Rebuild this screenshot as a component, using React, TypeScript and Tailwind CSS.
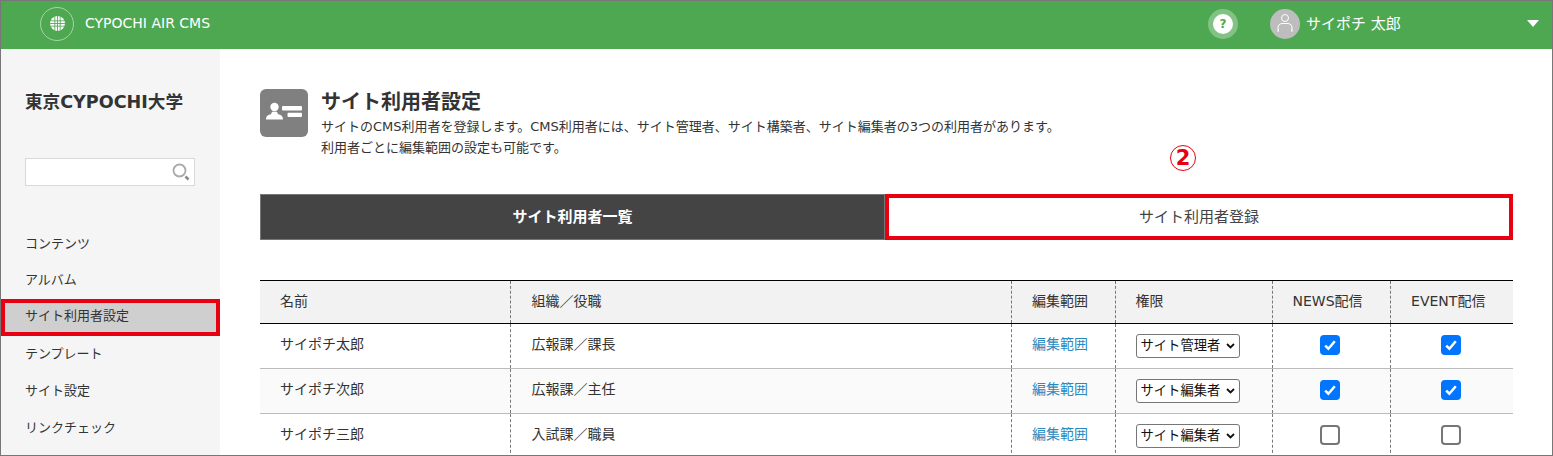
import React from "react";

const FONT = "font-['DejaVu_Sans','Noto_Sans_CJK_JP',sans-serif]";

const navItems = ["コンテンツ", "アルバム", "サイト利用者設定", "テンプレート", "サイト設定", "リンクチェック"];

const users = [
  { name: "サイポチ太郎", org: "広報課／課長", role: "サイト管理者", news: true, event: true, alt: false },
  { name: "サイポチ次郎", org: "広報課／主任", role: "サイト編集者", news: true, event: true, alt: true },
  { name: "サイポチ三郎", org: "入試課／職員", role: "サイト編集者", news: false, event: false, alt: false },
];

const GlobeIcon = () => (
  <svg width="15" height="15" viewBox="0 0 14 14" fill="none">
    <circle cx="7" cy="7" r="7" fill="#fff" />
    <path d="M0 4.5h14M0 7h14M0 9.5h14M4.5 0v14M7 0v14M9.5 0v14" stroke="#4ea851" strokeWidth="0.8" />
  </svg>
);

const UserIcon = () => (
  <svg width="20" height="22" viewBox="0 0 20 22" fill="none" stroke="#fff" strokeWidth="1">
    <circle cx="10" cy="5" r="3.5" />
    <path d="M3 19v-4a4.5 4.5 0 0 1 4-4.5h6a4.5 4.5 0 0 1 4 4.5v4M3 17h1M16 17h1" />
  </svg>
);

const CardIcon = () => (
  <svg className="shrink-0" width="48" height="48" viewBox="0 0 48 48">
    <rect width="48" height="48" rx="6" fill="#808080" />
    <circle cx="14.5" cy="18" r="4.2" fill="#fff" />
    <path d="M6 30.5c0-3.5 2-4.5 5-5.2l1-2.5h5l1 2.5c3 .7 5 1.7 5 5.2z" fill="#fff" />
    <rect x="22" y="17" width="20" height="4.6" rx="1" fill="#fff" />
    <rect x="27.5" y="23.7" width="14.5" height="4.2" rx="1" fill="#fff" />
  </svg>
);

const Check = ({ on }: { on: boolean }) =>
  on ? (
    <span className="inline-flex h-[20px] w-[20px] items-center justify-center rounded-[4px] bg-[#0075ff]">
      <svg width="16" height="16" viewBox="0 0 15 15" fill="none" stroke="#fff" strokeWidth="2.4">
        <path d="M3 8l3 3 6-7" />
      </svg>
    </span>
  ) : (
    <span className="inline-block h-[20px] w-[20px] rounded-[4px] border-2 border-[#767676] bg-white" />
  );

const RoleSelect = ({ label }: { label: string }) => (
  <div className="flex h-[24px] w-[104px] items-center justify-between rounded-[3px] border border-[#767676] bg-white pl-1 pr-[4px] text-[13.3px] text-[#111]">
    <span className="whitespace-nowrap">{label}</span>
    <svg width="9" height="6" viewBox="0 0 9 6" fill="none" stroke="#111" strokeWidth="1.8">
      <path d="M1 1l3.5 3.5L8 1" />
    </svg>
  </div>
);

const thCls = "border-l border-dashed border-[#777] pb-[2px] font-normal text-[14px]";
const tdCls = "border-l border-dashed border-[#777]";

export default function App() {
  return (
    <div className={`${FONT} flex h-[456px] w-[1553px] flex-col overflow-hidden border border-[#777] text-[#333]`}>
      {/* Header */}
      <header className="flex h-[48px] shrink-0 items-center bg-[#4ea851] pb-[2px] text-white">
        <div className="mb-[1px] ml-[39px] flex h-[34px] w-[34px] items-center justify-center rounded-full border border-[#a5d4a7]">
          <GlobeIcon />
        </div>
        <span className="mb-[1px] ml-[11px] text-[14px]">CYPOCHI AIR CMS</span>
        <div className="ml-auto flex h-[30px] w-[30px] items-center justify-center rounded-full bg-[#83c285]">
          <span className="flex h-[20px] w-[20px] items-center justify-center rounded-full bg-white text-[12px] font-bold text-[#4ea851]">?</span>
        </div>
        <div className="ml-[32px] flex h-[30px] w-[30px] items-center justify-center rounded-full bg-[#bdbdbd]">
          <UserIcon />
        </div>
        <span className="ml-[6px] w-[221px] text-[15px]">サイポチ 太郎</span>
        <span className="mb-[2px] mr-[13px] h-0 w-0 border-x-[6.5px] border-t-[7px] border-x-transparent border-t-white" />
      </header>

      <div className="flex min-h-0 flex-1">
        {/* Sidebar */}
        <aside className="w-[219px] shrink-0 bg-[#f5f5f5]">
          <h2 className="ml-[24px] mt-[41px] text-[17.6px] font-bold leading-[24px] text-[#333]">東京CYPOCHI大学</h2>
          <div className="relative ml-[24px] mt-[44px] h-[28px] w-[170px] border border-[#d9d9d9] bg-white">
            <svg className="absolute right-[3px] top-[3px]" width="20" height="20" viewBox="0 0 20 20" fill="none">
              <circle cx="8.5" cy="8.5" r="6" stroke="#aaa" strokeWidth="1.8" />
              <path d="M14.5 14.5l3 3" stroke="#888" strokeWidth="2.5" />
            </svg>
          </div>
          <nav className="mt-[39px] text-[13px]">
            {navItems.map((item) =>
              item === "サイト利用者設定" ? (
                <div key={item} className="flex h-[37px] items-center border-4 border-[#e60012] bg-[#cfcfcf] pb-[2px] pl-[20px] text-[#333]">
                  {item}
                </div>
              ) : (
                <div key={item} className="flex h-[36.8px] items-center pl-[24px]">
                  {item}
                </div>
              )
            )}
          </nav>
        </aside>

        {/* Main */}
        <main className="min-w-0 flex-1 bg-white pl-[40px] pr-[39px]">
          <div className="mt-[40px] flex">
            <CardIcon />
            <div className="ml-[13px]">
              <h1 className="text-[20px] font-bold leading-[27px] text-[#333]">サイト利用者設定</h1>
              <p className="text-[13px] leading-[21px] text-[#333]">
                サイトのCMS利用者を登録します。CMS利用者には、サイト管理者、サイト構築者、サイト編集者の3つの利用者があります。
                <br />
                利用者ごとに編集範囲の設定も可能です。
              </p>
            </div>
          </div>

          <div className="relative mt-[6px] h-[30px]">
            <span className="absolute left-[910px] top-[-19px] flex h-[26px] w-[26px] items-center justify-center rounded-full border border-[#e60012] text-[21px] font-bold leading-none text-[#e60012]">
              2
            </span>
          </div>

          {/* Tabs */}
          <div className="flex h-[46px]">
            <div className="flex w-[625px] items-center justify-center border border-[#777] bg-[#444] text-[15px] font-bold text-white">サイト利用者一覧</div>
            <div className="flex flex-1 items-center justify-center border-4 border-[#e60012] bg-white text-[15px] text-[#444]">サイト利用者登録</div>
          </div>

          {/* Table */}
          <table className="mt-[40px] w-full table-fixed border-collapse text-[14px]">
            <colgroup>
              <col className="w-[250px]" />
              <col className="w-[501px]" />
              <col className="w-[104px]" />
              <col className="w-[157px]" />
              <col className="w-[118px]" />
              <col />
            </colgroup>
            <thead>
              <tr className="h-[43px] border-y border-black bg-[#f2f2f2]">
                <th className="pb-[2px] pl-[20px] text-left text-[14px] font-normal">名前</th>
                <th className={`${thCls} pl-[21px] text-left`}>組織／役職</th>
                <th className={`${thCls} pr-[6px] text-center`}>編集範囲</th>
                <th className={`${thCls} pl-[20px] text-left`}>権限</th>
                <th className={`${thCls} pr-[7px] text-center`}>NEWS配信</th>
                <th className={`${thCls} pr-[7px] text-center`}>EVENT配信</th>
              </tr>
            </thead>
            <tbody>
              {users.map((u) => (
                <tr key={u.name} className={`h-[45px] border-b border-[#bbb] ${u.alt ? "bg-[#fafafa]" : "bg-white"}`}>
                  <td className="pb-[3px] pl-[20px]">{u.name}</td>
                  <td className={`${tdCls} pb-[3px] pl-[21px]`}>{u.org}</td>
                  <td className={`${tdCls} pb-[3px] pr-[6px] text-center text-[#2a8ac0]`}>編集範囲</td>
                  <td className={`${tdCls} pl-[20px]`}>
                    <RoleSelect label={u.role} />
                  </td>
                  <td className={`${tdCls} pb-[2px] pr-[2px] text-center align-middle`}>
                    <div className="flex justify-center"><Check on={u.news} /></div>
                  </td>
                  <td className={`${tdCls} pb-[2px] pr-[2px] text-center align-middle`}>
                    <div className="flex justify-center"><Check on={u.event} /></div>
                  </td>
                </tr>
              ))}
            </tbody>
          </table>
        </main>
      </div>
    </div>
  );
}
